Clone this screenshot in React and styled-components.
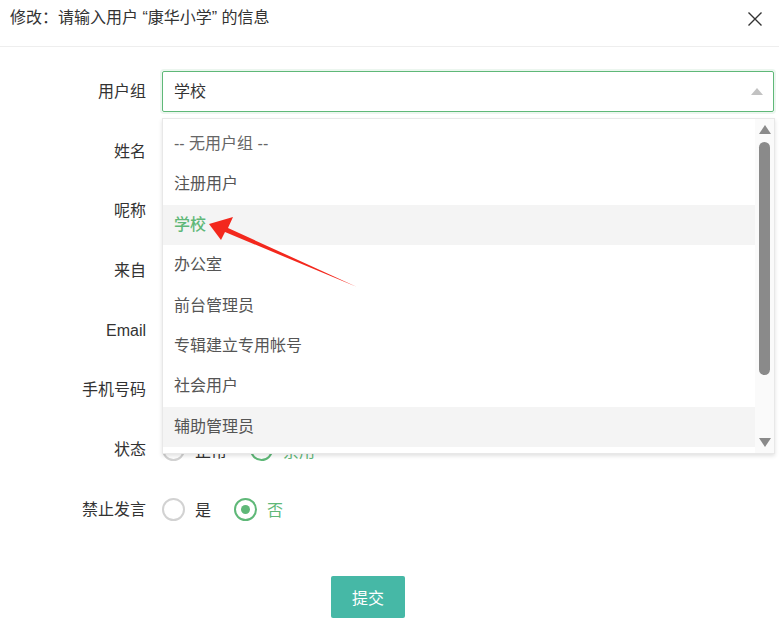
import React from 'react'
import styled, { createGlobalStyle } from 'styled-components'

const GlobalStyle = createGlobalStyle`
  html, body {
    margin: 0;
    padding: 0;
    background: #ffffff;
  }
  body {
    font-family: "Liberation Sans", "Noto Sans CJK SC", sans-serif;
    color: #333;
  }
  * { box-sizing: border-box; }
`

const green = '#5FB878'

const Page = styled.div`
  position: relative;
  width: 779px;
  height: 626px;
  overflow: hidden;
  background: #fff;
`

const Header = styled.div`
  height: 47px;
  border-bottom: 1px solid #eeeeee;
  display: flex;
  align-items: flex-start;
  justify-content: space-between;
  padding: 7px 16px 0 10px;
`

const Title = styled.div`
  font-size: 16px;
  line-height: 22px;
  color: #333;
`

const CloseBtn = styled.button`
  border: none;
  background: none;
  padding: 0;
  margin-top: 4px;
  width: 16px;
  height: 16px;
  cursor: pointer;
  display: flex;
`

const Form = styled.div`
  padding: 24px 5px 0 0;
`

const Row = styled.div`
  display: flex;
  align-items: center;
  height: 41px;
  margin-bottom: 18.7px;
`

const Label = styled.div`
  width: 146px;
  flex: none;
  text-align: right;
  font-size: 16px;
  line-height: 20px;
  padding-top: 1px;
  color: #333;
  margin-right: 16px;
`

const Field = styled.div`
  position: relative;
  flex: 1;
  height: 100%;
  display: flex;
  align-items: center;
`

const SelectBox = styled.div`
  width: 100%;
  height: 100%;
  border: 1px solid ${green};
  border-radius: 2px;
  box-shadow: 0 0 0 2px rgba(95, 184, 120, 0.12);
  display: flex;
  align-items: center;
  justify-content: space-between;
  padding: 0 10px 3px 11px;
  font-size: 16px;
  color: #333;
`

const Caret = styled.span`
  width: 0;
  height: 0;
  margin-top: 3px;
  border-left: 6px solid transparent;
  border-right: 6px solid transparent;
  border-bottom: 7px solid #c2c2c2;
`

const TextInput = styled.div`
  width: 100%;
  height: 100%;
  border: 1px solid #e6e6e6;
  border-radius: 2px;
`

const Dropdown = styled.div`
  position: absolute;
  top: 47px;
  left: 0;
  right: -1px;
  height: 336px;
  background: #fff;
  border: 1px solid #e8e8e8;
  box-shadow: 0 2px 4px rgba(0, 0, 0, 0.12);
  display: flex;
  z-index: 5;
`

const OptionList = styled.ul`
  list-style: none;
  margin: 0;
  padding: 5px 0 0;
  flex: 1;
`

const Option = styled.li`
  height: 40.4px;
  line-height: 40px;
  padding-left: 11px;
  font-size: 16px;
  color: ${p => (p.$selected ? green : p.$muted ? '#666' : '#555')};
  font-weight: ${p => (p.$selected ? 500 : 'normal')};
  background: ${p => (p.$selected || p.$hover ? '#f4f4f4' : 'transparent')};
`

const Rail = styled.div`
  width: 19px;
  flex: none;
  background: #fafafa;
  display: flex;
  flex-direction: column;
  align-items: center;
  padding-top: 6px;
`

const RailArrow = styled.span`
  width: 0;
  height: 0;
  border-left: 6.5px solid transparent;
  border-right: 6.5px solid transparent;
  ${p => (p.$down ? 'border-top: 9px solid #8a8a8a;' : 'border-bottom: 9px solid #8a8a8a;')}
`

const Thumb = styled.div`
  width: 11px;
  height: 233px;
  margin: 8px 0 63px;
  border-radius: 6px;
  background: #8a8a8a;
`

const RadioGroup = styled.div`
  display: flex;
  align-items: center;
`

const RadioItem = styled.label`
  display: flex;
  align-items: center;
  margin-right: 23px;
  font-size: 16px;
  color: ${p => (p.$checked ? green : '#333')};
  cursor: pointer;
`

const Circle = styled.span`
  width: 23px;
  height: 23px;
  border-radius: 50%;
  border: 2px solid ${p => (p.$checked ? green : '#d2d2d2')};
  display: flex;
  align-items: center;
  justify-content: center;
  margin-right: 10px;
  &::after {
    content: '';
    width: 9px;
    height: 9px;
    border-radius: 50%;
    background: ${p => (p.$checked ? green : 'transparent')};
  }
`

const Actions = styled.div`
  padding: 27px 0 0 331px;
`

const SubmitBtn = styled.button`
  width: 74px;
  height: 42px;
  border: none;
  border-radius: 2px;
  background: #46b8a6;
  color: #fff;
  font-size: 16px;
  font-family: inherit;
  cursor: pointer;
`

const Annotation = styled.svg`
  position: absolute;
  left: 0;
  top: 0;
  pointer-events: none;
  z-index: 10;
`

const groups = ['-- 无用户组 --', '注册用户', '学校', '办公室', '前台管理员', '专辑建立专用帐号', '社会用户', '辅助管理员']

const Radio = ({ label, checked }) => (
  <RadioItem $checked={checked}>
    <Circle $checked={checked} />
    {label}
  </RadioItem>
)

const App = () => {
  const textRows = ['姓名', '呢称', '来自', 'Email', '手机号码']
  return (
    <Page>
      <GlobalStyle />
      <Header>
        <Title>修改：请输入用户 “康华小学” 的信息</Title>
        <CloseBtn>
          <svg width="16" height="16" viewBox="0 0 16 16">
            <path d="M1.5 1.5 L14.5 14.5 M14.5 1.5 L1.5 14.5" stroke="#333" strokeWidth="1.4" />
          </svg>
        </CloseBtn>
      </Header>
      <Form>
        <Row>
          <Label>用户组</Label>
          <Field>
            <SelectBox>
              学校
              <Caret />
            </SelectBox>
            <Dropdown>
              <OptionList>
                {groups.map((g, i) => (
                  <Option key={g} $muted={i === 0} $selected={g === '学校'} $hover={g === '辅助管理员'}>
                    {g}
                  </Option>
                ))}
              </OptionList>
              <Rail>
                <RailArrow />
                <Thumb />
                <RailArrow $down />
              </Rail>
            </Dropdown>
          </Field>
        </Row>
        {textRows.map(t => (
          <Row key={t}>
            <Label>{t}</Label>
            <Field>
              <TextInput />
            </Field>
          </Row>
        ))}
        <Row>
          <Label>状态</Label>
          <RadioGroup>
            <Radio label="正常" />
            <Radio label="禁用" checked />
          </RadioGroup>
        </Row>
        <Row>
          <Label>禁止发言</Label>
          <RadioGroup>
            <Radio label="是" />
            <Radio label="否" checked />
          </RadioGroup>
        </Row>
        <Actions>
          <SubmitBtn>提交</SubmitBtn>
        </Actions>
      </Form>
      <Annotation width="779" height="626" viewBox="0 0 779 626">
        <polygon points="209,224 233,217 228,228 357,287 225,232 221,240" fill="#f3281d" />
      </Annotation>
    </Page>
  )
}

export default App
